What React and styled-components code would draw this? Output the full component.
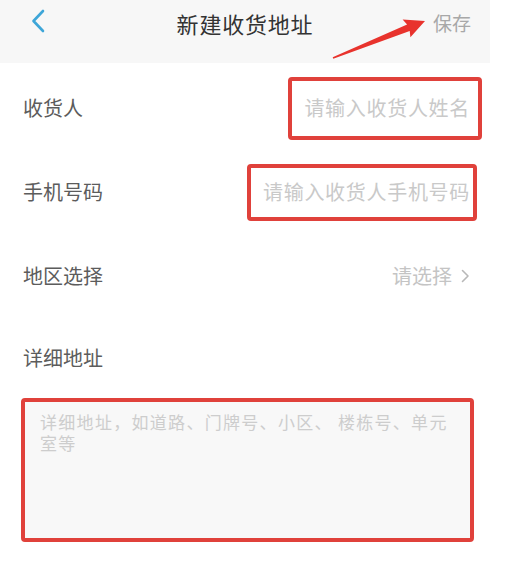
import React from "react";
import styled, { createGlobalStyle } from "styled-components";

const Global = createGlobalStyle`
  html, body { margin: 0; padding: 0; background: #ffffff; }
  body { font-family: "Noto Sans CJK SC", "Noto Sans", sans-serif; }
  * { box-sizing: border-box; }
`;

const Screen = styled.div`
  position: relative;
  width: 490px;
  min-height: 587px;
  background: #ffffff;
`;

const Header = styled.header`
  height: 63px;
  background: #f7f7f7;
  display: grid;
  grid-template-columns: 80px 1fr 80px;
  align-items: center;
`;

const BackButton = styled.div`
  padding-left: 31px;
  padding-bottom: 21px;
  display: flex;
  align-items: center;
`;

const Title = styled.h1`
  margin: 0 0 18px;
  text-align: center;
  font-size: 22px;
  letter-spacing: 0.8px;
  font-weight: 400;
  color: #333333;
  line-height: 1;
`;

const SaveText = styled.div`
  justify-self: end;
  padding-right: 19px;
  margin-bottom: 18px;
  font-size: 19px;
  color: #a8a8a8;
  line-height: 1;
`;

const Form = styled.div`
  padding-top: 3px;
`;

const Row = styled.div`
  height: ${(p) => p.$h || 84}px;
  display: flex;
  align-items: center;
  justify-content: space-between;
  padding-left: 23px;
`;

const Label = styled.div`
  font-size: 20px;
  color: #5c5c5c;
  line-height: 1;
`;

const MarkedInput = styled.div`
  width: ${(p) => p.$w}px;
  height: ${(p) => p.$h}px;
  margin-right: ${(p) => p.$right}px;
  border: 4px solid #e0413b;
  border-radius: 4px;
  display: flex;
  align-items: center;
  justify-content: flex-end;
  padding-right: ${(p) => p.$pad}px;
  font-size: 20px;
  letter-spacing: 0.7px;
  color: #c9c9c9;
  line-height: 1;
  white-space: nowrap;
  overflow: hidden;
`;

const Picker = styled.div`
  display: flex;
  align-items: center;
  gap: 9px;
  margin-right: 20px;
  font-size: 20px;
  color: #c4c4c4;
  line-height: 1;
`;

const TextBox = styled.div`
  margin: 0 16px 0 21px;
  height: 144px;
  border: 4px solid #e0413b;
  border-radius: 4px;
  background: #f8f8f8;
  padding: 9px 10px 0 15px;
`;

const AreaPlaceholder = styled.div`
  font-size: 17px;
  letter-spacing: 1.3px;
  line-height: 21px;
  color: #cdcdcd;
`;

const ArrowLayer = styled.svg`
  position: absolute;
  left: 0;
  top: 0;
  pointer-events: none;
`;

export default function App() {
  return (
    <>
      <Global />
      <Screen>
        <Header>
          <BackButton>
            <svg width="14" height="24" viewBox="0 0 14 24">
              <polyline
                points="12,2 2.5,12 12,22"
                fill="none"
                stroke="#3ea6d8"
                strokeWidth="2.6"
                strokeLinecap="round"
                strokeLinejoin="round"
              />
            </svg>
          </BackButton>
          <Title>新建收货地址</Title>
          <SaveText>保存</SaveText>
        </Header>
        <Form>
          <Row>
            <Label>收货人</Label>
            <MarkedInput $w={194} $h={63} $right={8} $pad={8}>
              请输入收货人姓名
            </MarkedInput>
          </Row>
          <Row>
            <Label>手机号码</Label>
            <MarkedInput $w={230} $h={57} $right={13} $pad={3}>
              请输入收货人手机号码
            </MarkedInput>
          </Row>
          <Row>
            <Label>地区选择</Label>
            <Picker>
              请选择
              <svg width="9" height="14" viewBox="0 0 9 14">
                <polyline
                  points="1.5,1.5 7,7 1.5,12.5"
                  fill="none"
                  stroke="#b8b8b8"
                  strokeWidth="1.6"
                  strokeLinecap="round"
                  strokeLinejoin="round"
                />
              </svg>
            </Picker>
          </Row>
          <Row $h={80}>
            <Label>详细地址</Label>
          </Row>
          <TextBox>
            <AreaPlaceholder>
              详细地址，如道路、门牌号、小区、 楼栋号、单元
              <br />
              室等
            </AreaPlaceholder>
          </TextBox>
        </Form>
        <ArrowLayer width="490" height="80" viewBox="0 0 490 80">
          <polygon
            points="332.7,57.3 407.1,24.6 402.6,19.6 425,21 410.4,37.2 409.7,31 333.3,58.7"
            fill="#e8332d"
          />
        </ArrowLayer>
      </Screen>
    </>
  );
}
